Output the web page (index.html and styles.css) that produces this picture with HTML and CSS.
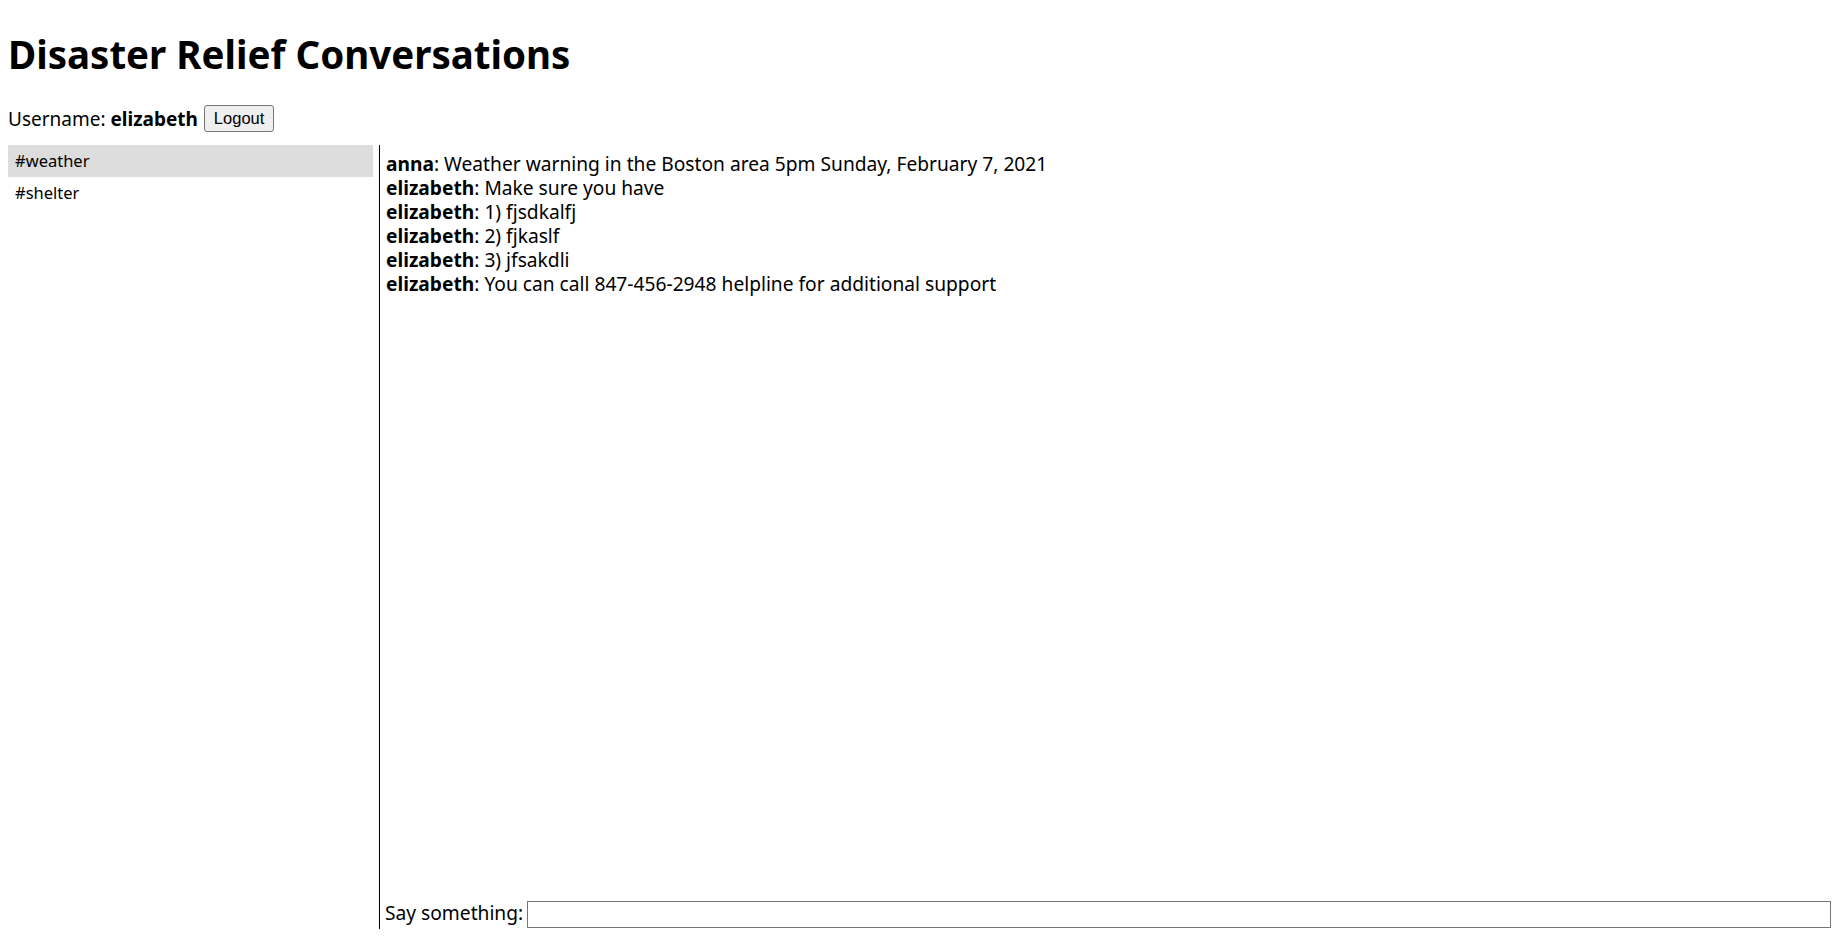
FILE: index.html
```html
<!DOCTYPE html>
<html lang="en">
<head>
<meta charset="utf-8">
<title>Disaster Relief Conversations</title>
<link rel="stylesheet" href="styles.css">
</head>
<body>
<h1 class="title">Disaster Relief Conversations</h1>
<div class="userbar">
  <span class="user-label">Username: <b>elizabeth</b></span>
  <button class="logout" type="button">Logout</button>
</div>
<div class="main">
  <ul class="channels">
    <li class="channel selected">#weather</li>
    <li class="channel">#shelter</li>
  </ul>
  <div class="chat">
    <div class="messages">
      <div class="msg"><b>anna</b>: Weather warning in the Boston area 5pm Sunday, February 7, 2021</div>
      <div class="msg"><b>elizabeth</b>: Make sure you have</div>
      <div class="msg"><b>elizabeth</b>: 1) fjsdkalfj</div>
      <div class="msg"><b>elizabeth</b>: 2) fjkaslf</div>
      <div class="msg"><b>elizabeth</b>: 3) jfsakdli</div>
      <div class="msg"><b>elizabeth</b>: You can call 847-456-2948 helpline for additional support</div>
    </div>
    <form class="composer">
      <label class="composer-label" for="say">Say something:</label>
      <input class="composer-input" id="say" type="text">
    </form>
  </div>
</div>
</body>
</html>
```
FILE: styles.css
```css
html, body {
  height: 100%;
}
body {
  margin: 0;
  padding: 8px;
  box-sizing: border-box;
  display: flex;
  flex-direction: column;
  font-family: "Noto Sans", "Open Sans", sans-serif;
  font-size: 19px;
  color: #000;
  background: #fff;
}
.title {
  margin: 23px 0 0;
  font-size: 38.5px;
  line-height: 46px;
  font-weight: 700;
}
.userbar {
  display: flex;
  align-items: center;
  gap: 6px;
  margin-top: 28px;
  height: 27px;
}
.user-label b {
  font-weight: 700;
}
.logout {
  font-family: "Liberation Sans", Arial, sans-serif;
  font-size: 16.5px;
  height: 27px;
  padding: 0 9px;
  background: #efefef;
  border: 1px solid #767676;
  border-radius: 3px;
  color: #000;
}
.main {
  flex: 1;
  display: flex;
  margin-top: 13px;
  min-height: 0;
}
.channels {
  list-style: none;
  margin: 0 6px 0 0;
  padding: 0;
  width: 365px;
  flex: none;
}
.channel {
  font-size: 16.5px;
  padding: 4px 7px;
  line-height: 23.5px;
}
.channel.selected {
  background: #dddddd;
}
.chat {
  flex: 1;
  display: flex;
  flex-direction: column;
  border-left: 1px solid #000;
  padding: 7px 4px 0 6px;
}
.messages {
  flex: 1;
  font-size: 19.2px;
  line-height: 24px;
}
.composer {
  display: flex;
  align-items: center;
  gap: 4px;
  margin: 0 0 0 -1px;
}
.composer-label {
  font-size: 19.2px;
  padding-bottom: 3px;
}
.composer-input {
  flex: 1;
  height: 27px;
  box-sizing: border-box;
  border: 1px solid #767676;
  border-radius: 0;
  padding: 1px 2px;
  font-size: 16px;
}
```
